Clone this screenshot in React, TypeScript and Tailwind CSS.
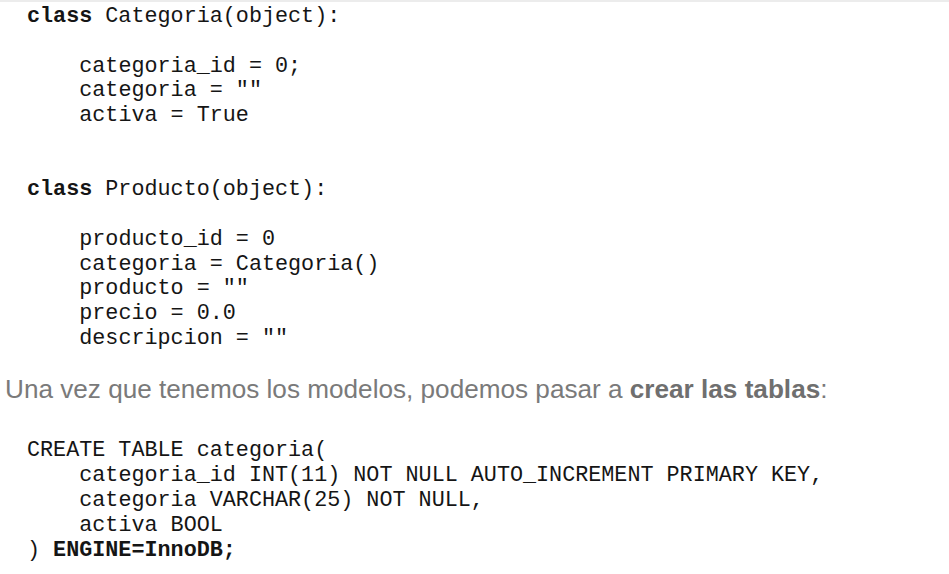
import React from 'react';

const mono = "font-['Liberation_Mono',monospace]";

export default function App() {
  return (
    <div className="min-h-screen w-full bg-white border-t-2 border-[#ececec] overflow-hidden">
      <pre className={`${mono} text-[21.75px] leading-[24.77px] text-[#151515] pl-[27px] pt-[3px] m-0`}>
        <b>class</b> Categoria(object):{'\n'}
        {'\n'}
        {'    '}categoria_id = 0;{'\n'}
        {'    '}categoria = ""{'\n'}
        {'    '}activa = True{'\n'}
        {'\n'}
        {'\n'}
        <b>class</b> Producto(object):{'\n'}
        {'\n'}
        {'    '}producto_id = 0{'\n'}
        {'    '}categoria = Categoria(){'\n'}
        {'    '}producto = ""{'\n'}
        {'    '}precio = 0.0{'\n'}
        {'    '}descripcion = ""
      </pre>

      <p className="font-['Liberation_Sans',Arial,sans-serif] text-[26.15px] leading-[40px] text-[#7a7a7a] pl-[5px] mt-[17px] whitespace-nowrap">
        Una vez que tenemos los modelos, podemos pasar a <b className="text-[#6f6f6f]">crear las tablas</b>:
      </p>

      <pre className={`${mono} text-[21.75px] leading-[25px] text-[#151515] pl-[27px] mt-[29px]`}>
        CREATE TABLE categoria({'\n'}
        {'    '}categoria_id INT(11) NOT NULL AUTO_INCREMENT PRIMARY KEY,{'\n'}
        {'    '}categoria VARCHAR(25) NOT NULL,{'\n'}
        {'    '}activa BOOL{'\n'}
        ) <b>ENGINE=InnoDB;</b>
      </pre>
    </div>
  );
}
